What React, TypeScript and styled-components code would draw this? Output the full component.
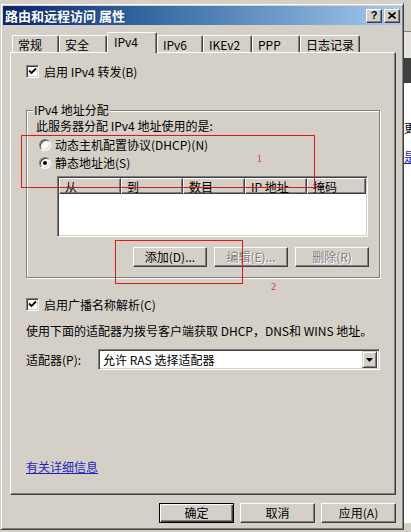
import React from "react";
import styled, { createGlobalStyle, css } from "styled-components";

const FONT = `"Noto Sans CJK SC", "Liberation Sans", sans-serif`;

const GlobalStyle = createGlobalStyle`
  html, body { margin: 0; padding: 0; background: #d4d0c8; }
  body { width: 411px; height: 532px; overflow: hidden; font-family: ${FONT}; font-size: 12px; color: #000; }
  * { box-sizing: border-box; }
`;

const Screen = styled.div`
  display: flex;
  width: 411px;
  height: 532px;
  align-items: flex-start;
  background: #d4d0c8;
`;

const Dialog = styled.div`
  margin-top: 3px;
  width: 404px;
  height: 527px;
  flex: none;
  display: flex;
  flex-direction: column;
  background: #d4d0c8;
  border: 1px solid;
  border-color: #d4d0c8 #404040 #404040 #d4d0c8;
  box-shadow: inset 1px 1px 0 #fff, inset -1px -1px 0 #808080;
  padding: 2px;
`;

const TitleBar = styled.div`
  height: 19px;
  display: flex;
  align-items: center;
  padding: 0 1px 0 2px;
  background: linear-gradient(to right, #0a246a, #3a6ea5 40%, #a6caf0);
`;

const Title = styled.div`
  flex: 1;
  color: #fff;
  font-weight: bold;
  font-size: 13px;
  line-height: 15px;
  white-space: nowrap;
`;

const CaptionBtn = styled.div<{ $gap?: number }>`
  width: 16px;
  height: 14px;
  margin-left: ${(p) => p.$gap ?? 0}px;
  display: flex;
  align-items: center;
  justify-content: center;
  background: #d4d0c8;
  border: 1px solid;
  border-color: #fff #404040 #404040 #fff;
  box-shadow: inset -1px -1px 0 #808080;
  font-family: "Liberation Sans", sans-serif;
  font-weight: bold;
  font-size: 11px;
  line-height: 11px;
`;

const Body = styled.div`
  display: flex;
  flex-direction: column;
  padding: 0 5px 0 7px;
`;

const TabStrip = styled.div`
  position: relative;
  z-index: 1;
  margin-top: 7px;
  height: 20px;
  display: flex;
  align-items: flex-end;
  padding-left: 2px;
`;

const Tab = styled.div<{ $active?: boolean; $w: number }>`
  width: ${(p) => p.$w}px;
  height: ${(p) => (p.$active ? 21 : 17)}px;
  margin-bottom: ${(p) => (p.$active ? -1 : 0)}px;
  padding: 2px 0 0 ${(p) => (p.$active ? 6 : 5)}px;
  line-height: 14px;
  white-space: nowrap;
  background: #d4d0c8;
  border-top: 1px solid #fff;
  border-left: 1px solid #fff;
  border-right: 1px solid #404040;
  border-top-left-radius: 2px;
  border-top-right-radius: 2px;
  box-shadow: inset -1px 0 0 #808080;
`;

const Panel = styled.div`
  position: relative;
  height: 443px;
  display: flex;
  flex-direction: column;
  align-items: flex-start;
  padding-left: 15px;
  border: 1px solid;
  border-color: #fff #404040 #404040 #fff;
  box-shadow: inset -1px -1px 0 #808080;
`;

const Row = styled.div<{ $mt: number; $h?: number; $ml?: number }>`
  display: flex;
  align-items: center;
  margin-top: ${(p) => p.$mt}px;
  margin-left: ${(p) => p.$ml ?? 0}px;
  height: ${(p) => p.$h ?? 14}px;
  line-height: 14px;
  white-space: nowrap;
`;

const CheckBox = styled.span`
  width: 13px;
  height: 13px;
  margin-right: 5px;
  flex: none;
  display: flex;
  align-items: center;
  justify-content: center;
  background: #fff;
  border: 1px solid;
  border-color: #808080 #fff #fff #808080;
  box-shadow: inset 1px 1px 0 #404040, inset -1px -1px 0 #d4d0c8;
`;

const Radio = styled.span<{ $on?: boolean }>`
  width: 12px;
  height: 12px;
  margin-right: 4px;
  flex: none;
  border-radius: 50%;
  background: #fff;
  border: 1px solid;
  border-color: #808080 #fff #fff #808080;
  box-shadow: inset 1px 1px 0 #404040, inset -1px -1px 0 #d4d0c8;
  display: flex;
  align-items: center;
  justify-content: center;
  &::after {
    content: "";
    width: 4px;
    height: 4px;
    border-radius: 50%;
    background: ${(p) => (p.$on ? "#000" : "transparent")};
  }
`;

const GroupBox = styled.div`
  position: relative;
  margin-top: 32px;
  width: 354px;
  height: 168px;
  display: flex;
  flex-direction: column;
  align-items: flex-start;
  padding: 8px 10px 0 9px;
  border: 1px solid #808080;
  box-shadow: 1px 1px 0 #fff, inset 1px 1px 0 #fff;
`;

const GroupLabel = styled.span`
  position: absolute;
  top: -7px;
  left: 6px;
  padding: 0 1px;
  line-height: 12px;
  background: #d4d0c8;
  white-space: nowrap;
`;

const ListView = styled.div`
  margin: 6px 0 0 21px;
  width: 311px;
  height: 61px;
  background: #fff;
  border: 1px solid;
  border-color: #808080 #fff #fff #808080;
  box-shadow: inset 1px 1px 0 #404040, inset -1px -1px 0 #d4d0c8;
  padding: 1px;
`;

const ListHeader = styled.div`
  display: flex;
  height: 16px;
`;

const HeadCell = styled.div<{ $w?: number }>`
  ${(p) => (p.$w ? css`width: ${p.$w}px;` : css`flex: 1;`)}
  height: 16px;
  line-height: 15px;
  padding-left: 5px;
  background: #d4d0c8;
  border-top: 1px solid #fff;
  border-left: 1px solid #fff;
  border-right: 1px solid #404040;
  border-bottom: 1px solid #404040;
  box-shadow: inset -1px -1px 0 #808080;
  white-space: nowrap;
`;

const BtnRow = styled.div<{ $mt: number; $gap: number }>`
  align-self: stretch;
  display: flex;
  justify-content: flex-end;
  gap: ${(p) => p.$gap}px;
  margin-top: ${(p) => p.$mt}px;
`;

const Btn = styled.button<{ $w: number; $default?: boolean }>`
  width: ${(p) => p.$w}px;
  height: 20px;
  padding: 0;
  font-family: ${FONT};
  font-size: 12px;
  line-height: 14px;
  background: #d4d0c8;
  color: #000;
  border: 1px solid;
  border-color: #fff #404040 #404040 #fff;
  box-shadow: inset -1px -1px 0 #808080;
  white-space: nowrap;
  &:disabled {
    color: #808080;
    text-shadow: 1px 1px 0 #fff;
  }
  ${(p) =>
    p.$default &&
    css`
      border-color: #000;
      box-shadow: inset 1px 1px 0 #fff, inset -1px -1px 0 #404040,
        inset -2px -2px 0 #808080;
    `}
`;

const FieldLabel = styled.span`
  width: 72px;
  flex: none;
`;

const Combo = styled.div`
  width: 282px;
  height: 21px;
  display: flex;
  align-items: center;
  padding: 2px 2px 2px 4px;
  background: #fff;
  border: 1px solid;
  border-color: #808080 #fff #fff #808080;
  box-shadow: inset 1px 1px 0 #404040, inset -1px -1px 0 #d4d0c8;
`;

const ComboText = styled.span`
  flex: 1;
  line-height: 14px;
  white-space: nowrap;
`;

const DropBtn = styled.span`
  width: 15px;
  height: 17px;
  display: flex;
  align-items: center;
  justify-content: center;
  background: #d4d0c8;
  border: 1px solid;
  border-color: #d4d0c8 #404040 #404040 #d4d0c8;
  box-shadow: inset 1px 1px 0 #fff, inset -1px -1px 0 #808080;
`;

const Link = styled.a`
  margin-top: 90px;
  line-height: 14px;
  color: #1f1fc0;
  text-decoration: underline;
  cursor: pointer;
`;

const Footer = styled.div`
  display: flex;
  justify-content: flex-end;
  gap: 6px;
  margin-top: 8px;
`;

const RedBox = styled.div<{ $l: number; $t: number; $w: number; $h: number }>`
  position: absolute;
  left: ${(p) => p.$l}px;
  top: ${(p) => p.$t}px;
  width: ${(p) => p.$w}px;
  height: ${(p) => p.$h}px;
  border: 1px solid #e01818;
  pointer-events: none;
`;

const RedNum = styled.span<{ $l: number; $t: number }>`
  position: absolute;
  left: ${(p) => p.$l}px;
  top: ${(p) => p.$t}px;
  color: #d83030;
  font-family: "Liberation Serif", serif;
  font-size: 10px;
  line-height: 10px;
`;

const SideStrip = styled.div`
  flex: 1;
  height: 532px;
  display: flex;
  flex-direction: column;
  overflow: hidden;
`;

const StripBlock = styled.div<{ $h: number; $bg: string }>`
  height: ${(p) => p.$h}px;
  flex: none;
  background: ${(p) => p.$bg};
`;

const StripWhite = styled.div`
  height: 440px;
  flex: none;
  background: #fff;
  display: flex;
  flex-direction: column;
  padding-top: 38px;
  line-height: 14px;
  white-space: nowrap;
`;

const StripGlyph = styled.span<{ $color: string; $mt: number }>`
  margin-top: ${(p) => p.$mt}px;
  color: ${(p) => p.$color};
  text-decoration: ${(p) => (p.$color === "#000" ? "none" : "underline")};
`;

const Check = () => (
  <svg width="9" height="9" viewBox="0 0 9 9">
    <polyline points="1,3.5 3.5,6 8,1.5" fill="none" stroke="#000" strokeWidth="1.8" />
  </svg>
);

const tabs: [string, number][] = [
  ["常规", 47],
  ["安全", 48],
  ["IPv4", 50],
  ["IPv6", 46],
  ["IKEv2", 49],
  ["PPP", 48],
  ["日志记录", 60],
];

const cols: [string, number | undefined][] = [
  ["从", 62],
  ["到", 62],
  ["数目", 62],
  ["IP 地址", 62],
  ["掩码", undefined],
];

export default function App() {
  return (
    <Screen>
      <GlobalStyle />
      <Dialog>
        <TitleBar>
          <Title>路由和远程访问 属性</Title>
          <CaptionBtn>?</CaptionBtn>
          <CaptionBtn $gap={2}>
            <svg width="8" height="7" viewBox="0 0 8 7">
              <path d="M0.5 0.5 L7.5 6.5 M7.5 0.5 L0.5 6.5" stroke="#000" strokeWidth="1.6" />
            </svg>
          </CaptionBtn>
        </TitleBar>
        <Body>
          <TabStrip>
            {tabs.map(([label, w]) => (
              <Tab key={label} $w={w} $active={label === "IPv4"}>
                {label}
              </Tab>
            ))}
          </TabStrip>
          <Panel>
            <Row $mt={12} $h={13}>
              <CheckBox>
                <Check />
              </CheckBox>
              启用 IPv4 转发(B)
            </Row>
            <GroupBox>
              <GroupLabel>IPv4 地址分配</GroupLabel>
              <Row $mt={0}>此服务器分配 IPv4 地址使用的是:</Row>
              <Row $mt={5} $ml={3}>
                <Radio />
                动态主机配置协议(DHCP)(N)
              </Row>
              <Row $mt={4} $ml={3}>
                <Radio $on />
                静态地址池(S)
              </Row>
              <ListView>
                <ListHeader>
                  {cols.map(([c, w]) => (
                    <HeadCell key={c} $w={w}>
                      {c}
                    </HeadCell>
                  ))}
                </ListHeader>
              </ListView>
              <BtnRow $mt={10} $gap={7}>
                <Btn $w={74}>添加(D)...</Btn>
                <Btn $w={74} disabled>
                  编辑(E)...
                </Btn>
                <Btn $w={74} disabled>
                  删除(R)
                </Btn>
              </BtnRow>
            </GroupBox>
            <Row $mt={20} $h={13}>
              <CheckBox>
                <Check />
              </CheckBox>
              启用广播名称解析(C)
            </Row>
            <Row $mt={13}>使用下面的适配器为拨号客户端获取 DHCP，DNS和 WINS 地址。</Row>
            <Row $mt={11} $h={21}>
              <FieldLabel>适配器(P):</FieldLabel>
              <Combo>
                <ComboText>允许 RAS 选择适配器</ComboText>
                <DropBtn>
                  <svg width="7" height="4" viewBox="0 0 7 4">
                    <path d="M0 0 H7 L3.5 4 Z" fill="#000" />
                  </svg>
                </DropBtn>
              </Combo>
            </Row>
            <Link>有关详细信息</Link>
            <RedBox $l={10} $t={82} $w={294} $h={53} />
            <RedBox $l={104} $t={187} $w={128} $h={44} />
            <RedNum $l={246} $t={101}>1</RedNum>
            <RedNum $l={260} $t={229}>2</RedNum>
          </Panel>
          <Footer>
            <Btn $w={75} $default>
              确定
            </Btn>
            <Btn $w={75}>取消</Btn>
            <Btn $w={75}>应用(A)</Btn>
          </Footer>
        </Body>
      </Dialog>
      <SideStrip>
        <StripBlock $h={31} $bg="#d4d0c8" />
        <StripBlock $h={1} $bg="#808080" />
        <StripBlock $h={26} $bg="#e4e2dc" />
        <StripBlock $h={25} $bg="#404040" />
        <StripWhite>
          <StripGlyph $color="#000" $mt={0}>更</StripGlyph>
          <StripGlyph $color="#1f1fc0" $mt={15}>是</StripGlyph>
        </StripWhite>
      </SideStrip>
    </Screen>
  );
}
